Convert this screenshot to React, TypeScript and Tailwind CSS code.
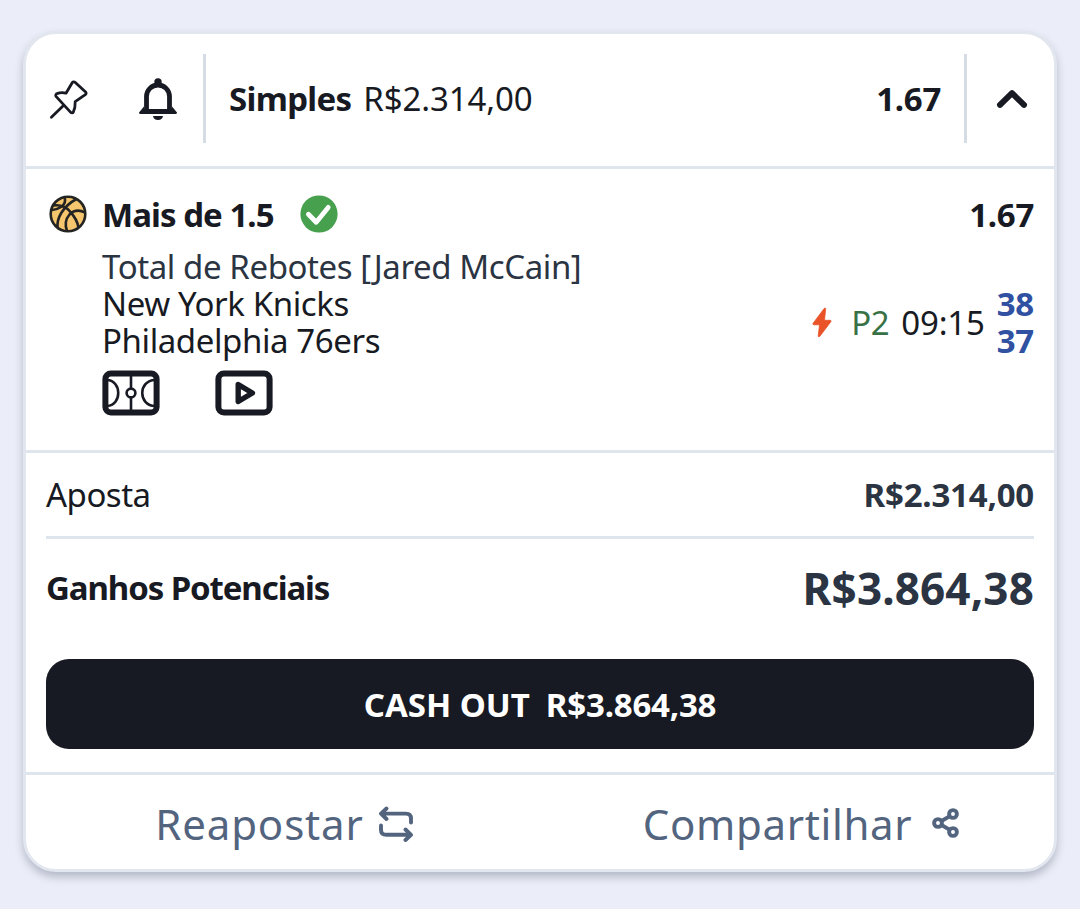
import React from 'react';

const PinIcon = () => (
  <svg className="w-[42px] h-[42px]" viewBox="0 0 42 42" fill="none" stroke="#171a22" strokeWidth="2.8" strokeLinecap="round" strokeLinejoin="round">
    <path d="M3.4 39.2 15.5 27.6" />
    <path d="M8 18.4Q7 16.2 9.6 15.4Q13.4 13.9 18 15.2L24.2 4.7Q25.6 3 27.3 4.6L37.6 14Q38.8 15.3 37.3 16.6L27.2 23.6Q27.4 30 25.3 34.1Q24.3 35.6 22.7 34.4Z" />
  </svg>
);

const BellIcon = () => (
  <svg className="w-[38px] h-[43px]" viewBox="0 0 38 43" fill="#171a22">
    <circle cx="19" cy="4" r="3.7" />
    <path d="M7.5 32V18.5a11.5 11.5 0 0 1 23 0V32" fill="none" stroke="#171a22" strokeWidth="4.8" />
    <path d="M5 28.5V31.1H33V28.5L38 34.5Q38 36 36.5 36H1.5Q0 36 0 34.5Z" />
    <path d="M14 38h10q-.7 4-5 4t-5-4Z" />
  </svg>
);

const ChevronIcon = () => (
  <svg className="w-8 h-5" viewBox="0 0 32 20" fill="none" stroke="#171a22" strokeWidth="6" strokeLinecap="round" strokeLinejoin="round">
    <path d="M4 15.8 16 4.2 28 15.8" />
  </svg>
);

const BasketballIcon = () => (
  <svg className="w-[38px] h-[38px]" viewBox="0 0 38 38" fill="none" stroke="#242423" strokeWidth="2.6">
    <circle cx="19" cy="19" r="17.3" fill="#f6c66e" />
    <path d="M4 10.5Q15 9 21 16.5Q28 24 29.5 32.5" />
    <path d="M15.5 2Q17.5 8 12.5 11.8Q8.5 14.6 2 15.2" />
    <path d="M27.5 4Q18 9 12.2 18Q8 25 8.5 32.5" />
    <path d="M36 17.5Q27 13 20.5 19.5Q14.5 26.5 18 36" />
  </svg>
);

const CheckBadge = () => (
  <svg className="w-[38px] h-[38px]" viewBox="0 0 38 38">
    <circle cx="19" cy="19" r="18.6" fill="#46a04d" />
    <path d="M8.4 19.2 16.2 27.2 28.2 12.4" fill="none" stroke="#fff" strokeWidth="4.8" strokeLinecap="round" strokeLinejoin="round" />
  </svg>
);

const CourtIcon = () => (
  <svg className="w-[58px] h-[46px]" viewBox="0 0 58 46" fill="none" stroke="#171a22" strokeWidth="2.6">
    <rect x="3.4" y="3.4" width="51.2" height="39.2" rx="5.5" strokeWidth="6" />
    <path d="M29 5V18M29 28V41" />
    <circle cx="29" cy="23" r="4.4" />
    <path d="M5 10C20 10.5 20 35.5 5 36M53 10C36 10.5 36 35.5 53 36" />
  </svg>
);

const PlayIcon = () => (
  <svg className="w-[58px] h-[46px]" viewBox="0 0 58 46" fill="none" stroke="#171a22" strokeLinejoin="round">
    <rect x="3.4" y="3.4" width="51.2" height="39.2" rx="5.5" strokeWidth="6" />
    <path d="M23.2 14.5 37.4 23 23.2 31.5Z" strokeWidth="5.4" />
  </svg>
);

const BoltIcon = () => (
  <svg className="w-5 h-[31px]" viewBox="0 0 20 31">
    <path d="M12.2 1.4 1 16.4Q.6 17.8 2 17.8H7.5L6.2 29.3Q6.8 30.4 7.8 29.3L19 14.6Q19.3 13.3 18 13.3H12.5L13.7 1.5Q13 .5 12.2 1.4Z" fill="#ea5228" stroke="#ea5228" strokeWidth=".8" />
  </svg>
);

const RepeatIcon = () => (
  <svg className="w-9 h-9" viewBox="0 0 36 36" fill="none" stroke="#53647f" strokeWidth="3.9" strokeLinecap="round" strokeLinejoin="round">
    <path d="M8.5 2.5 3 7.6 8.5 13M3.5 7.6H28Q33 7.6 33 12.5V16.5" />
    <path d="M27.5 23.5 33 28.8 27.5 34M32.5 28.8H8.4Q3 28.8 3 24V19.5" />
  </svg>
);

const ShareIcon = () => (
  <svg className="w-7 h-[30px]" viewBox="0 0 28 30" fill="none" stroke="#53647f" strokeWidth="3.9">
    <path d="M9.5 13 17 8.6M9.5 17 17 21.4" />
    <circle cx="6" cy="15" r="3.9" />
    <circle cx="21" cy="6" r="3.9" />
    <circle cx="21" cy="24" r="3.9" />
  </svg>
);

const App = () => {
  return (
    <div className="h-[909px] bg-[#ebeef8] px-[23px] pt-[31px] font-['Noto_Sans',sans-serif] text-[33px] leading-[37px] text-[#171a22] whitespace-nowrap">
      <main className="flex flex-col w-[1034px] h-[841px] bg-white border-[3px] border-[#e1e6ef] rounded-[33px] shadow-[0_5px_9px_rgba(40,45,75,0.28)]">
        {/* Header */}
        <header className="flex items-start h-[135px] border-b-[3px] border-[#dfe5ec] pt-5">
          <div className="flex items-center w-[177px] h-[90px] pl-[22px]">
            <PinIcon />
            <div className="ml-[49px]"><BellIcon /></div>
          </div>
          <div className="flex items-center flex-1 h-[89px] border-x-[3px] border-[#d6dce3] pl-[23px] pr-[23px]">
            <span className="font-bold tracking-[-0.7px]">Simples</span>
            <span className="ml-3 tracking-[-0.1px]">R$2.314,00</span>
            <span className="ml-auto font-bold tracking-[-0.3px]">1.67</span>
          </div>
          <div className="flex items-center justify-center w-[87px] h-[90px] pl-[2px]">
            <ChevronIcon />
          </div>
        </header>

        {/* Selection */}
        <section className="h-[284px] border-b-[3px] border-[#dfe5ec] pl-[23px] pr-5 pt-[26px]">
          <div className="flex items-center h-[38px]">
            <BasketballIcon />
            <span className="w-[185px] ml-[15px] font-bold tracking-[-0.95px]">Mais de 1.5</span>
            <div className="ml-[13px]"><CheckBadge /></div>
            <span className="ml-auto font-bold tracking-[-0.3px]">1.67</span>
          </div>
          <div className="flex pl-[53px] pt-[15px]">
            <div className="tracking-[-0.41px]">
              <p className="text-[#2b3442]">Total de Rebotes [Jared McCain]</p>
              <p>New York Knicks</p>
              <p>Philadelphia 76ers</p>
            </div>
            <div className="flex items-center h-[74px] ml-auto mt-[37px]">
              <BoltIcon />
              <span className="w-[37px] ml-[19px] tracking-[-0.5px] text-[#387145]">P2</span>
              <span className="ml-[13px] tracking-[-0.2px]">09:15</span>
              <div className="ml-[12px] font-bold tracking-[-0.2px] text-[#3050a2]">
                <p>38</p>
                <p>37</p>
              </div>
            </div>
          </div>
          <div className="flex gap-[55px] pl-[53px] pt-[11px]">
            <CourtIcon />
            <PlayIcon />
          </div>
        </section>

        {/* Stake and payout */}
        <section className="h-[322px] px-5 border-b-[3px] border-[#dfe5ec]">
          <div className="flex items-center justify-between h-[86px] border-b-[3px] border-[#dfe5ec]">
            <span className="tracking-[-0.5px]">Aposta</span>
            <span className="font-bold tracking-[-0.2px] text-[#2b3442]">R$2.314,00</span>
          </div>
          <div className="flex items-center justify-between h-[99px]">
            <span className="pb-[2px] font-bold tracking-[-1.1px]">Ganhos Potenciais</span>
            <span className="font-bold text-[44px] tracking-[0.15px] text-[#2b3442]">R$3.864,38</span>
          </div>
          <button className="flex items-center justify-center w-full h-[90px] mt-[21px] rounded-[23px] bg-[#171a22] text-white font-bold">
            <span>CASH OUT</span>
            <span className="ml-4 tracking-[-0.2px]">R$3.864,38</span>
          </button>
        </section>

        {/* Actions */}
        <footer className="flex items-center h-[94px] pt-[3px] text-[42px] leading-[60px] text-[#53647f]">
          <button className="flex items-center w-[514px] pl-[129px]">
            <span className="w-[209px] tracking-[0.85px]">Reapostar</span>
            <div className="ml-[14px]"><RepeatIcon /></div>
          </button>
          <button className="flex items-center w-[514px] pl-[101px]">
            <span className="w-[273px] tracking-[0.65px]">Compartilhar</span>
            <div className="ml-[18px] pb-[2px]"><ShareIcon /></div>
          </button>
        </footer>
      </main>
    </div>
  );
};

export default App;
